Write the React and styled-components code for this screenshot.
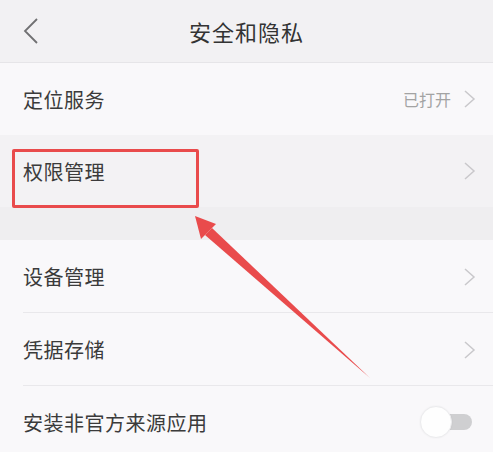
import React from "react";
import styled, { createGlobalStyle } from "styled-components";

const Global = createGlobalStyle`
  html, body { margin: 0; padding: 0; background: #f9f8fa; }
  body { font-family: "Noto Sans CJK SC", "Noto Sans", sans-serif; }
`;

const Page = styled.div`
  position: relative;
  width: 493px;
  height: 452px;
  overflow: hidden;
  background: #f9f8fa;
`;

const Header = styled.header`
  height: 62px;
  border-bottom: 1px solid #e6e5e8;
  background: #f2f1f3;
  display: grid;
  grid-template-columns: 60px 1fr 60px;
  align-items: center;
`;

const BackBtn = styled.div`
  display: flex;
  align-items: center;
  padding-left: 22px;
  height: 100%;
`;

const Title = styled.h1`
  margin: 0;
  text-align: center;
  font-size: 22px;
  font-weight: 400;
  color: #333;
  letter-spacing: 1px;
`;

const Row = styled.div`
  height: ${(p) => (p.$divider ? 73 : 72)}px;
  display: flex;
  align-items: center;
  justify-content: space-between;
  padding: 0 16px 0 23px;
  background: ${(p) => (p.$active ? "#f3f2f4" : "#f9f8fa")};
  position: relative;
  ${(p) =>
    p.$divider &&
    `&::after{content:"";position:absolute;left:23px;right:0;bottom:0;height:1px;background:#e9e8eb;}`}
`;

const Label = styled.span`
  font-size: 20px;
  color: #3b3b3b;
  letter-spacing: 0.5px;
`;

const Right = styled.div`
  display: flex;
  align-items: center;
  gap: 12px;
`;

const Value = styled.span`
  font-size: 16px;
  color: #a3a3a3;
`;

const Gap = styled.div`
  height: 33px;
  background: #efeef0;
`;

const Toggle = styled.div`
  position: relative;
  width: 52px;
  height: 32px;
  margin-right: 5px;
`;

const Track = styled.div`
  position: absolute;
  left: 14px;
  top: 8px;
  width: 38px;
  height: 16px;
  border-radius: 8px;
  background: #cfcfd1;
`;

const Knob = styled.div`
  position: absolute;
  left: 0;
  top: 0;
  width: 30px;
  height: 30px;
  border-radius: 50%;
  background: #fefefe;
  border: 1px solid #ececee;
  box-shadow: 0 0 2px rgba(0,0,0,0.06);
`;

const Highlight = styled.div`
  position: absolute;
  left: 12px;
  top: 149px;
  width: 181px;
  height: 53px;
  border: 3px solid #e94b4c;
  border-radius: 2px;
`;

const Overlay = styled.svg`
  position: absolute;
  left: 0;
  top: 0;
  pointer-events: none;
`;

const Chevron = () => (
  <svg width="14" height="18" viewBox="0 0 14 18">
    <polyline points="2,1 11,9 2,17" fill="none" stroke="#c9c8cb" strokeWidth="1.5" />
  </svg>
);

export default function App() {
  return (
    <Page>
      <Global />
      <Header>
        <BackBtn>
          <svg width="18" height="28" viewBox="0 0 18 28">
            <polyline points="15,2 3,14 15,26" fill="none" stroke="#707072" strokeWidth="1.8" />
          </svg>
        </BackBtn>
        <Title>安全和隐私</Title>
        <div />
      </Header>
      <Row>
        <Label>定位服务</Label>
        <Right>
          <Value>已打开</Value>
          <Chevron />
        </Right>
      </Row>
      <Row $active>
        <Label>权限管理</Label>
        <Right>
          <Chevron />
        </Right>
      </Row>
      <Gap />
      <Row $divider>
        <Label>设备管理</Label>
        <Right>
          <Chevron />
        </Right>
      </Row>
      <Row $divider>
        <Label>凭据存储</Label>
        <Right>
          <Chevron />
        </Right>
      </Row>
      <Row>
        <Label>安装非官方来源应用</Label>
        <Toggle>
          <Track />
          <Knob />
        </Toggle>
      </Row>
      <Highlight />
      <Overlay width="493" height="452" viewBox="0 0 493 452">
        <polygon points="205,235 212,228 370,378" fill="#e94b4c" />
        <polygon points="195,216 216,224 201,239" fill="#e94b4c" />
      </Overlay>
    </Page>
  );
}
